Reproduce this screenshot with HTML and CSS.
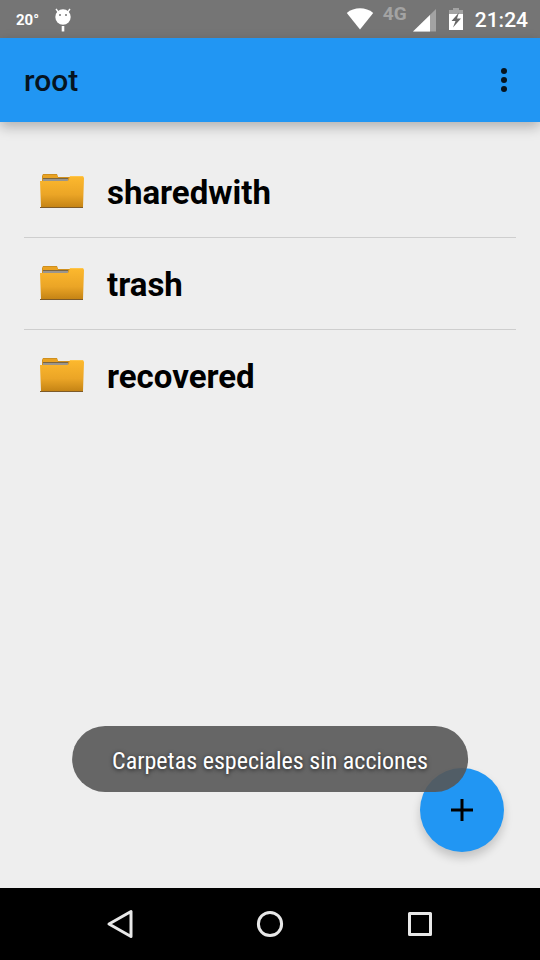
FILE: index.html
```html
<!DOCTYPE html>
<html lang="es">
<head>
<meta charset="utf-8">
<meta name="viewport" content="width=device-width, initial-scale=1">
<title>root</title>
<link rel="stylesheet" href="styles.css">
</head>
<body>
<svg class="defs" width="0" height="0" aria-hidden="true">
  <defs>
    <linearGradient id="front" x1="0" y1="0" x2="0" y2="1">
      <stop offset="0" stop-color="#fdb92e"/>
      <stop offset=".6" stop-color="#eba526"/>
      <stop offset="1" stop-color="#c58415"/>
    </linearGradient>
    <symbol id="folder" viewBox="0 0 44 36">
      <path d="M2 12V2l1-2h14l1 3h12v8z" fill="#cf8f1d"/>
      <path d="M3 1h14l1 3H3z" fill="#e9a222"/>
      <path d="M3 5h25v3H3z" fill="#9a958d"/>
      <path d="M3 4h25v1H3z" fill="#7a6540"/>
      <path d="M0 7h27q2 0 2-2l1-3h13l1 2-1 29H1z" fill="url(#front)"/>
      <path d="M30 2.500h13" fill="none" stroke="#ffc548"/>
      <path d="M0 33h43v1H0z" fill="#7d5a28"/>
    </symbol>
  </defs>
</svg>
<div class="screen">
  <div class="status">
    <span class="temp">20°</span>
    <svg class="droid" width="18" height="25" viewBox="0 0 18 25" aria-hidden="true">
      <path d="M2 2l3 4M16 2l-3 4" stroke="#fff" stroke-width="1.4"/>
      <circle cx="9" cy="10" r="7.700" fill="#fff"/>
      <circle cx="6" cy="8" r="1" fill="#757575"/><circle cx="12" cy="8" r="1" fill="#757575"/>
      <path d="M7.700 19h2.600v5.500h-2.600z" fill="#fff"/>
    </svg>
    <svg class="wifi" width="28" height="22" viewBox="0 0 28 22" aria-hidden="true"><path d="M.8 5C8-1.200 20-1.200 27.200 5L14 21.500z" fill="#fff"/></svg>
    <span class="net">4G</span>
    <svg class="signal" width="24" height="24" viewBox="0 0 24 24" aria-hidden="true"><path d="M0 23.500L23 1v22.500z" fill="#a3a3a3"/><path d="M0 23.500L17 7v16.500z" fill="#fff"/></svg>
    <svg class="battery" width="14" height="22" viewBox="0 0 14 22" aria-hidden="true"><path d="M4 0h6v2h4v5H0V2h4z" fill="#a3a3a3"/><path d="M0 6h14v16H0z" fill="#fff"/><path d="M10 4.500L2.500 13h4L4 19.500 12 10.500H8z" fill="#666"/></svg>
    <span class="clock">21:24</span>
  </div>
  <header class="appbar">
    <h1 class="title">root</h1>
    <button class="more" type="button" aria-label="Más opciones">
      <svg width="6" height="24" viewBox="0 0 6 24"><circle cx="3" cy="3" r="3"/><circle cx="3" cy="12" r="3"/><circle cx="3" cy="21" r="3"/></svg>
    </button>
  </header>
  <main class="content">
    <ul class="list">
      <li><a class="row" href="#sharedwith"><svg class="icon"><use href="#folder"/></svg><span class="name">sharedwith</span></a></li>
      <li><a class="row" href="#trash"><svg class="icon"><use href="#folder"/></svg><span class="name">trash</span></a></li>
      <li><a class="row" href="#recovered"><svg class="icon"><use href="#folder"/></svg><span class="name">recovered</span></a></li>
    </ul>
    <button class="fab" type="button" aria-label="Añadir">
      <svg width="22" height="22" viewBox="0 0 22 22"><path d="M0 11h22M11 0v22" stroke="#000" stroke-width="3"/></svg>
    </button>
    <div class="toast" role="status">Carpetas especiales sin acciones</div>
  </main>
  <nav class="navbar">
    <button class="key" type="button" aria-label="Atrás"><svg width="28" height="30" viewBox="0 0 28 30"><path d="M3 15L25 2.500v25z"/></svg></button>
    <button class="key" type="button" aria-label="Inicio"><svg width="28" height="30" viewBox="0 0 28 30"><circle cx="14" cy="15" r="11.600"/></svg></button>
    <button class="key" type="button" aria-label="Recientes"><svg width="28" height="30" viewBox="0 0 28 30"><path d="M3.500 4.500h21v21h-21z"/></svg></button>
  </nav>
</div>
</body>
</html>
```
FILE: styles.css
```css
* { box-sizing: border-box; }
body {
  margin: 0;
  background: #eee;
  color: #000;
  font-family: Roboto, "Liberation Sans", sans-serif;
}
button { border: 0; padding: 0; background: none; }
svg { display: block; flex: none; }
.defs { position: absolute; }
.screen { display: flex; flex-direction: column; min-height: 100vh; }

.status {
  display: flex;
  align-items: center;
  height: 38px;
  padding: 0 12px 0 16px;
  background: #757575;
  color: #fff;
}
.temp { font-size: 15px; line-height: 20px; font-weight: 700; padding-top: 2px; }
.droid { margin: 0 auto 0 15px; }
.net { margin: 0 6px 10px 9px; font-size: 19px; line-height: 20px; font-weight: 700; color: #a3a3a3; }
.signal { margin-top: 2px; }
.battery { margin: 0 12px; }
.clock { font-size: 21px; line-height: 36px; padding-top: 2px; font-weight: 500; }

.appbar {
  display: flex;
  align-items: center;
  justify-content: space-between;
  height: 84px;
  padding: 0 12px 0 24px;
  background: #2196f3;
  box-shadow: 0 5px 12px rgba(0, 0, 0, .26);
  z-index: 1;
}
.title { margin: 0; font-size: 30px; font-weight: 500; color: #06141f; }
.more { display: grid; place-items: center; width: 48px; height: 48px; fill: #06141f; }

.content { position: relative; flex: 1; padding: 24px; }
.list { margin: 0; padding: 0; list-style: none; }
.list li { height: 92px; border-bottom: 1px solid #cecece; }
.list li:last-child { border-bottom: 0; }
.row {
  display: flex;
  align-items: center;
  gap: 23px;
  height: 91px;
  padding: 0 16px;
  color: #000;
  font-size: 33px;
  font-weight: 700;
  text-decoration: none;
}
.icon { width: 44px; height: 36px; }
.name { padding-top: 2px; }

.fab {
  position: absolute;
  right: 36px;
  bottom: 36px;
  display: grid;
  place-items: center;
  width: 84px;
  height: 84px;
  border-radius: 50%;
  background: #2196f3;
  box-shadow: 0 6px 10px rgba(0, 0, 0, .18);
}
.toast {
  position: absolute;
  bottom: 96px;
  left: 50%;
  transform: translateX(-50%);
  padding: 20px 40px 16px;
  border-radius: 33px;
  background: rgba(86, 86, 86, .9);
  color: #fff;
  font-family: "Roboto Condensed", Roboto, sans-serif;
  font-size: 24px;
  line-height: 30px;
  white-space: nowrap;
  text-shadow: 0 1px 4px rgba(0, 0, 0, .7);
}

.navbar {
  display: flex;
  justify-content: center;
  gap: 6px;
  height: 72px;
  background: #000;
}
.key {
  display: grid;
  place-items: center;
  width: 144px;
  height: 72px;
  fill: none;
  stroke: #e8e8e8;
  stroke-width: 3;
  stroke-linejoin: round;
}
```
